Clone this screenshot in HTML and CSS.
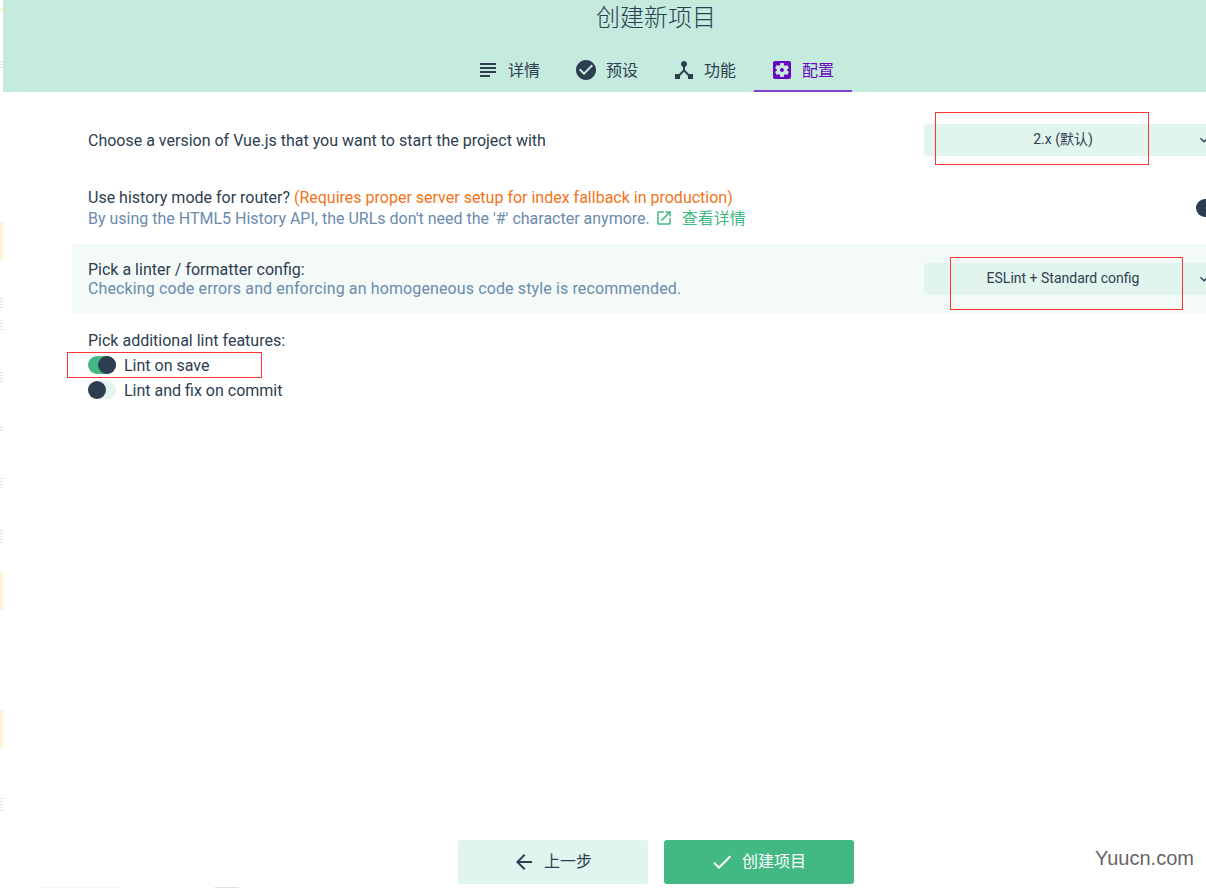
FILE: index.html
```html
<!DOCTYPE html>
<html lang="zh-CN">
<head>
<meta charset="utf-8">
<title>创建新项目</title>
<link rel="stylesheet" href="styles.css">
</head>
<body>
<div class="page">
  <div class="strip"></div>
  <div class="main">
    <header class="header">
      <h1 class="title">创建新项目</h1>
      <nav class="tabs">
        <div class="tab"><svg class="icon" viewBox="0 0 24 24"><path d="M14 17H4v2h10v-2zm6-8H4v2h16V9zM4 15h16v-2H4v2zM4 5v2h16V5H4z"/></svg><span class="tab-text">详情</span></div>
        <div class="tab"><svg class="icon" viewBox="0 0 24 24"><path d="M12 2C6.48 2 2 6.48 2 12s4.48 10 10 10 10-4.48 10-10S17.52 2 12 2zm-2 15l-5-5 1.41-1.41L10 14.17l7.59-7.59L19 8l-9 9z"/></svg><span class="tab-text">预设</span></div>
        <div class="tab"><svg class="icon" viewBox="0 0 24 24"><path d="M17 16l-4-4V8.82C14.16 8.4 15 7.3 15 6c0-1.66-1.34-3-3-3S9 4.34 9 6c0 1.3.84 2.4 2 2.82V12l-4 4H3v5h5v-3.05l4-4.2 4 4.2V21h5v-5h-4z"/></svg><span class="tab-text">功能</span></div>
        <div class="tab tab-active"><svg class="icon" viewBox="0 0 24 24"><path d="M12 10c-1.1 0-2 .9-2 2s.9 2 2 2 2-.9 2-2-.9-2-2-2zm7-7H5c-1.11 0-2 .9-2 2v14c0 1.1.89 2 2 2h14c1.11 0 2-.9 2-2V5c0-1.1-.89-2-2-2zm-1.75 9c0 .23-.02.46-.05.68l1.48 1.16c.13.11.17.3.08.45l-1.4 2.42c-.09.15-.27.21-.43.15l-1.74-.7c-.36.28-.76.51-1.18.69l-.26 1.85c-.03.17-.18.3-.35.3h-2.8c-.17 0-.32-.13-.35-.29l-.26-1.85c-.43-.18-.82-.41-1.18-.69l-1.74.7c-.16.06-.34 0-.43-.15l-1.4-2.42c-.09-.15-.05-.34.08-.45l1.48-1.16c-.03-.23-.05-.46-.05-.69 0-.23.02-.46.05-.68l-1.48-1.16c-.13-.11-.17-.3-.08-.45l1.4-2.42c.09-.15.27-.21.43-.15l1.74.7c.36-.28.76-.51 1.18-.69l.26-1.85c.03-.17.18-.3.35-.3h2.8c.17 0 .32.13.35.29l.26 1.85c.43.18.82.41 1.18.69l1.74-.7c.16-.06.34 0 .43.15l1.4 2.42c.09.15.05.34-.08.45l-1.48 1.16c.03.23.05.46.05.69z"/></svg><span class="tab-text">配置</span></div>
      </nav>
    </header>
    <section class="content">
      <div class="row row-first">
        <div class="info"><div class="label">Choose a version of Vue.js that you want to start the project with</div></div>
        <div class="select"><span class="select-text">2.x (默认)</span><svg class="chevron" viewBox="0 0 24 24"><path d="M16.59 8.59L12 13.17 7.41 8.59 6 10l6 6 6-6z"/></svg></div>
      </div>
      <div class="row">
        <div class="info">
          <div class="label">Use history mode for router? <span class="warn">(Requires proper server setup for index fallback in production)</span></div>
          <div class="desc">By using the HTML5 History API, the URLs don't need the '#' character anymore.<a class="more"><svg class="more-icon" viewBox="0 0 24 24"><path d="M19 19H5V5h7V3H5c-1.11 0-2 .9-2 2v14c0 1.1.89 2 2 2h14c1.1 0 2-.9 2-2v-7h-2v7zM14 3v2h3.59l-9.83 9.83 1.41 1.41L19 6.41V10h2V3h-7z"/></svg>查看详情</a></div>
        </div>
        <span class="toggle toggle-row"><span class="knob"></span></span>
      </div>
      <div class="row row-selected">
        <div class="info">
          <div class="label">Pick a linter / formatter config:</div>
          <div class="desc desc-tight">Checking code errors and enforcing an homogeneous code style is recommended.</div>
        </div>
        <div class="select"><span class="select-text">ESLint + Standard config</span><svg class="chevron" viewBox="0 0 24 24"><path d="M16.59 8.59L12 13.17 7.41 8.59 6 10l6 6 6-6z"/></svg></div>
      </div>
      <div class="group">
        <div class="label group-label">Pick additional lint features:</div>
        <div class="check"><span class="toggle toggle-on"><span class="knob"></span></span><span class="check-text">Lint on save</span></div>
        <div class="check"><span class="toggle"><span class="knob"></span></span><span class="check-text">Lint and fix on commit</span></div>
      </div>
    </section>
    <footer class="footer">
      <div class="btn btn-light"><svg class="icon" viewBox="0 0 24 24"><path d="M20 11H7.83l5.59-5.59L12 4l-8 8 8 8 1.41-1.41L7.83 13H20v-2z"/></svg><span class="btn-text">上一步</span></div>
      <div class="btn btn-primary"><svg class="icon" viewBox="0 0 24 24"><path d="M9 16.2L4.8 12l-1.4 1.4L9 19 21 7l-1.4-1.4L9 16.2z"/></svg><span class="btn-text">创建项目</span></div>
    </footer>
  </div>
  <span class="mark mark-a"></span>
  <span class="mark mark-b"></span>
  <span class="mark mark-c"></span>
  <span class="watermark">Yuucn.com</span>
</div>
</body>
</html>
```
FILE: styles.css
```css
* { box-sizing: border-box; }
html, body { margin: 0; padding: 0; height: 100%; }
body {
  overflow: hidden;
  background: #fff;
  color: #2c3e50;
  font-family: Roboto, "Noto Sans CJK SC", sans-serif;
  font-size: 16px;
}
.page {
  position: relative;
  display: flex;
  width: 1206px;
  height: 888px;
  overflow: hidden;
  background:
    linear-gradient(#f6f6f6, #f6f6f6) 40px 887px / 80px 1px no-repeat,
    linear-gradient(#dedede, #dedede) 215px 887px / 24px 1px no-repeat;
}

/* sliver of the window behind: faint yellow bands and grey text lines */
.strip {
  width: 3px;
  flex: none;
  --tick: repeating-linear-gradient(#e2e2e2 0 1px, #fff 1px 3px);
  background-repeat: no-repeat;
  background-size:
    3px 4px, 3px 38px, 3px 38px, 3px 38px,
    3px 9px, 3px 12px, 3px 10px, 3px 10px, 3px 5px, 3px 12px, 3px 13px, 3px 14px;
  background-position:
    0 8px, 0 222px, 0 572px, 0 710px,
    0 61px, 0 298px, 0 320px, 0 372px, 0 427px, 0 478px, 0 530px, 0 798px;
  background-image:
    linear-gradient(#fff0d6, #fff0d6), linear-gradient(#fff0d6, #fff0d6),
    linear-gradient(#fff0d6, #fff0d6), linear-gradient(#fff0d6, #fff0d6),
    var(--tick), var(--tick), var(--tick), var(--tick),
    var(--tick), var(--tick), var(--tick), var(--tick);
}

.main { width: 1306px; flex: none; display: flex; flex-direction: column; }

.header { background: #c5eade; height: 92px; display: flex; flex-direction: column; align-items: center; }
.title { margin: 0; height: 46px; line-height: 36px; font-size: 24px; font-weight: 300; color: #2c3e50; }
.tabs { display: flex; height: 46px; }
.tab {
  width: 98px;
  padding: 2px 18px 0 16px;
  display: flex;
  align-items: center;
  gap: 8px;
}
.tab-active { color: #6806c1; border-bottom: 2px solid #7f3fc8; padding-top: 4px; }
.tab-text { line-height: 20px; height: 20px; margin-top: 1px; }
.icon { width: 24px; height: 24px; flex: none; fill: currentColor; }

.content { flex: 1; padding: 12px 69px 0; }
.row { height: 70px; padding: 0 16px; display: flex; align-items: center; justify-content: space-between; }
.row-first { padding-top: 2px; }
.row-selected { background: #f4faf8; }
.info { min-width: 0; padding-bottom: 2px; }
.row-first .info { padding-bottom: 0; }
.label { line-height: 21px; }
.warn { color: #f2741a; }
.desc { line-height: 21px; color: #6a8bad; }
.desc-tight { line-height: 18px; letter-spacing: .12px; }
.more { color: #42b983; margin-left: 5px; letter-spacing: 0; }
.more-icon { width: 18px; height: 18px; fill: currentColor; vertical-align: -3px; margin-right: 9px; }

.select {
  width: 300px;
  height: 32px;
  flex: none;
  background: #e2f4ee;
  border-radius: 3px;
  display: flex;
  align-items: center;
  font-size: 14px;
}
.select-text { width: 278px; text-align: center; line-height: 20px; height: 20px; margin-top: -2px; }
.chevron { width: 16px; height: 16px; flex: none; fill: currentColor; margin-left: -6px; }

.toggle { position: relative; display: inline-block; width: 28px; height: 18px; border-radius: 9px; background: #e2f4ee; flex: none; }
.toggle-row { margin-bottom: 2px; }
.toggle-on { background: #42b983; }
.knob { position: absolute; top: 0; left: 0; width: 18px; height: 18px; border-radius: 50%; background: #2c3e50; }
.toggle-on .knob { left: 10px; }

.group { padding: 15px 0 0 16px; }
.group-label { line-height: 24px; height: 23px; }
.check { display: flex; align-items: flex-start; gap: 8px; height: 25px; padding-top: 4px; }
.check-text { line-height: 18px; padding-top: 1px; }

.footer { display: flex; justify-content: center; gap: 16px; padding-bottom: 4px; }
.btn { width: 190px; height: 44px; border-radius: 3px; display: flex; align-items: center; justify-content: center; gap: 8px; padding-right: 2px; }
.btn-text { line-height: 20px; height: 20px; }
.btn-light { background: #e2f4ee; }
.btn-primary { background: #42b983; color: #fff; }

.mark { position: absolute; border: 1px solid #f33; pointer-events: none; }
.mark-a { left: 935px; top: 112px; width: 214px; height: 53px; }
.mark-b { left: 950px; top: 257px; width: 233px; height: 53px; }
.mark-c { left: 67px; top: 352px; width: 195px; height: 26px; }

.watermark { position: absolute; left: 1095px; top: 846px; font-family: "Liberation Sans", sans-serif; font-size: 20px; line-height: 24px; color: #666; background: #fff; }
```
